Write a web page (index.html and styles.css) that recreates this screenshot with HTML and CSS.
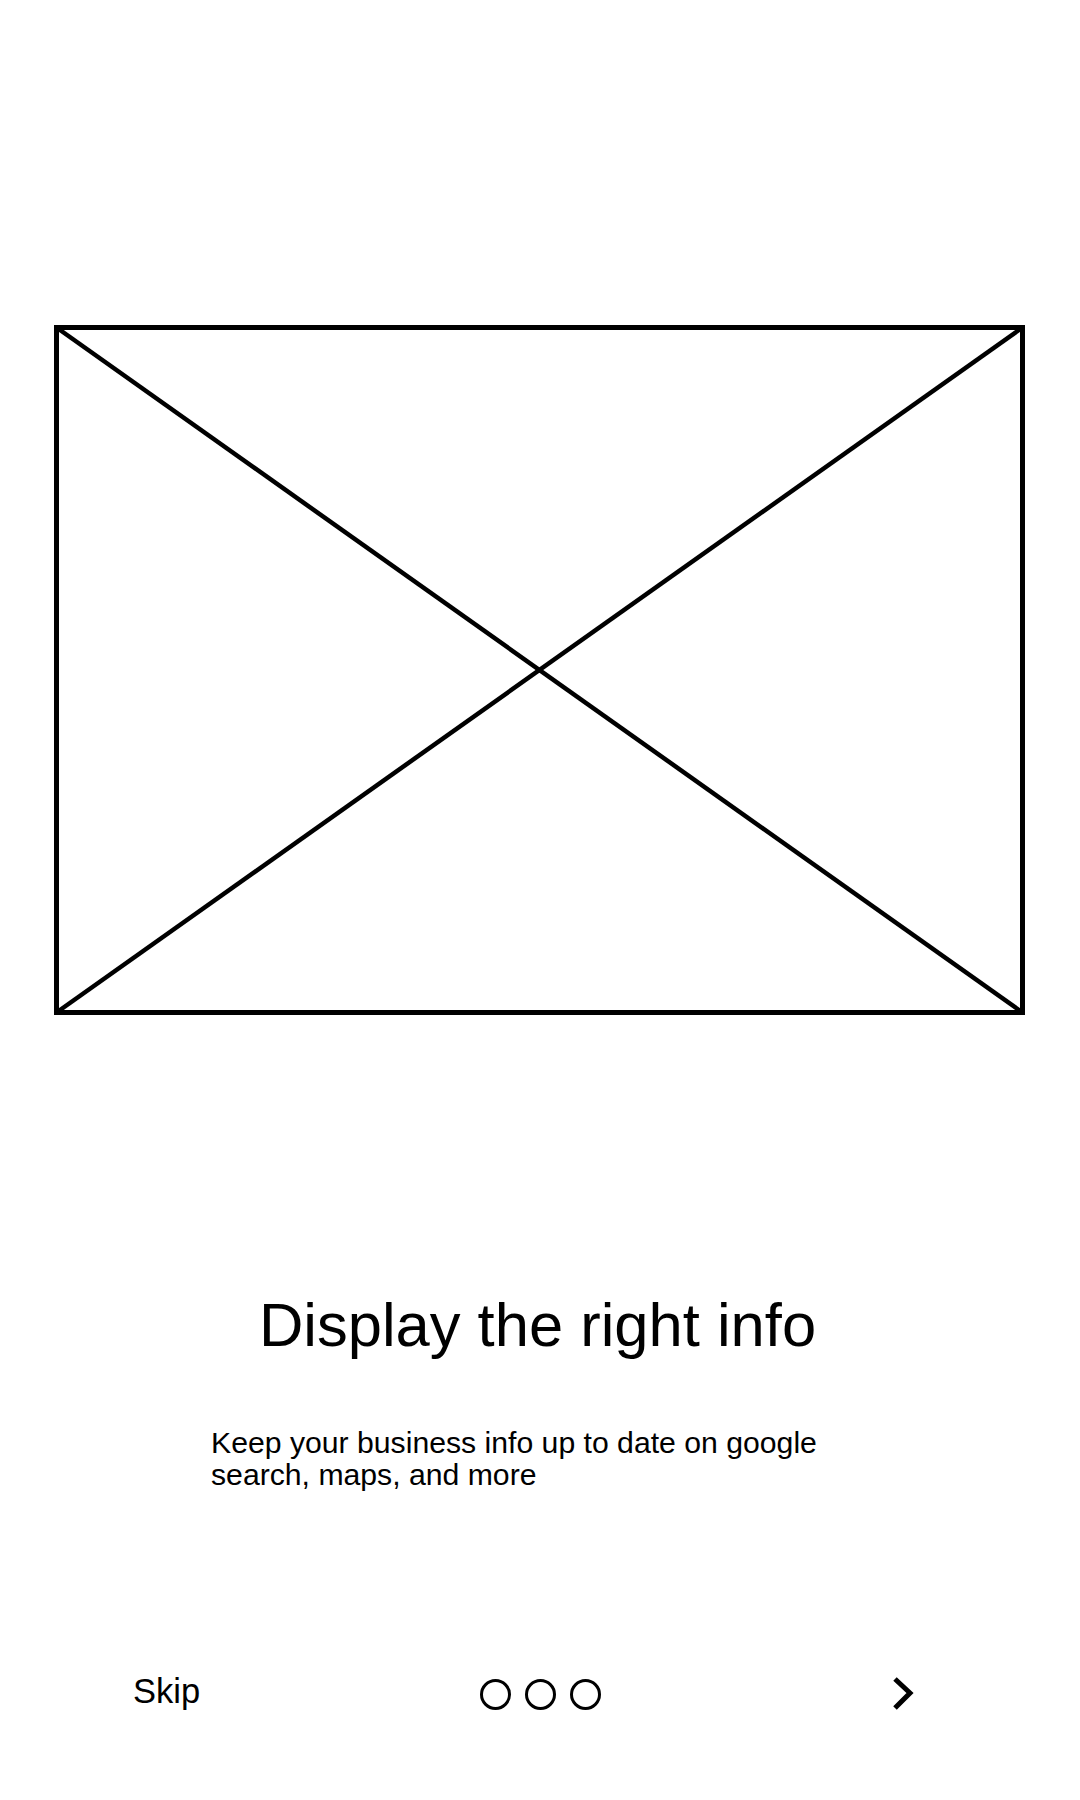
FILE: index.html
```html
<!DOCTYPE html>
<html lang="en">
  <head>
    <meta charset="utf-8" />
    <meta name="viewport" content="width=device-width, initial-scale=1.0" />
    <title>Onboarding - Display the right info</title>
    <link rel="stylesheet" href="styles.css">
  </head>
  <body>
    <div class="screen">
      <div class="placeholder">
        <svg width="971" height="690" viewBox="0 0 971 690">
          <rect x="2.5" y="2.5" width="966" height="685" fill="none" stroke="#000" stroke-width="5" />
          <line x1="2.5" y1="2.5" x2="968.5" y2="687.5" stroke="#000" stroke-width="4.5" />
          <line x1="968.5" y1="2.5" x2="2.5" y2="687.5" stroke="#000" stroke-width="4.5" />
        </svg>
      </div>

      <h1 class="title">Display the right info</h1>

      <p class="subtitle">
        Keep your business info up to date on google<br />
        search, maps, and more
      </p>

      <div class="footer">
        <a class="skip" href="#">Skip</a>
        <div class="dots">
          <span class="dot"></span>
          <span class="dot"></span>
          <span class="dot"></span>
        </div>
        <a class="next" href="#">
          <svg width="24" height="34" viewBox="0 0 24 34">
            <polyline points="4,2 19,16 4,31" fill="none" stroke="#000" stroke-width="5" />
          </svg>
        </a>
      </div>
    </div>
  </body>
</html>
```

FILE: styles.css
```css
body {
  margin: 0;
  background-color: #fff;
  color: #000;
  font-family: "Liberation Sans", Arial, sans-serif;
}

.screen {
  width: 1080px;
  height: 1800px;
  padding-top: 325px;
  box-sizing: border-box;
}

.placeholder {
  display: flex;
  justify-content: center;
  padding-right: 2px;
}

.placeholder svg {
  display: block;
}

.title {
  margin: 280px 0 0 0;
  padding-right: 5px;
  font-size: 61.5px;
  font-weight: normal;
  line-height: 60px;
  text-align: center;
}

.subtitle {
  margin: 72px 0 0 211px;
  font-size: 30.2px;
  line-height: 32px;
}

.footer {
  display: grid;
  grid-template-columns: 1fr auto 1fr;
  align-items: center;
  height: 60px;
  margin-top: 173px;
}

.skip {
  justify-self: start;
  padding-left: 133px;
  padding-bottom: 7px;
  font-size: 34.5px;
  line-height: 34px;
  color: #000;
  text-decoration: none;
}

.dots {
  display: flex;
  gap: 14px;
}

.dot {
  width: 25px;
  height: 25px;
  border: 3px solid #000;
  border-radius: 50%;
}

.next {
  justify-self: end;
  padding-right: 165px;
  display: flex;
}
```
